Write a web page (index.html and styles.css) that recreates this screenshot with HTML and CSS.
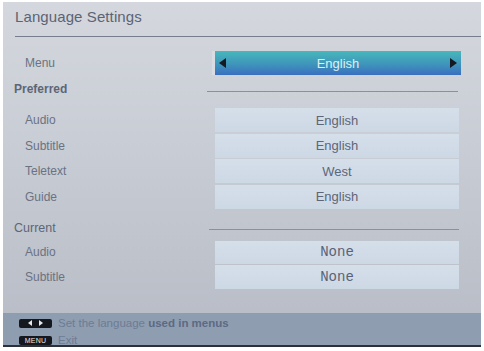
FILE: index.html
```html
<!DOCTYPE html>
<html>
<head>
<meta charset="utf-8">
<link rel="stylesheet" href="styles.css">
</head>
<body>
<div class="panel">
  <div class="header">
    <div class="title">Language Settings</div>
  </div>
  <div class="content">
    <div class="row menu-row">
      <div class="label">Menu</div>
      <div class="selector">
        <span class="arrow left"></span>
        <span class="sel-text">English</span>
        <span class="arrow right"></span>
      </div>
    </div>
    <div class="section preferred">
      <div class="section-title">Preferred</div>
      <div class="section-line"></div>
    </div>
    <div class="group">
      <div class="row item"><div class="label">Audio</div><div class="value">English</div></div>
      <div class="row item"><div class="label">Subtitle</div><div class="value">English</div></div>
      <div class="row item"><div class="label">Teletext</div><div class="value">West</div></div>
      <div class="row item"><div class="label">Guide</div><div class="value">English</div></div>
    </div>
    <div class="section current">
      <div class="section-title light">Current</div>
      <div class="section-line"></div>
    </div>
    <div class="group current-group">
      <div class="row item"><div class="label">Audio</div><div class="value mono">None</div></div>
      <div class="row item"><div class="label">Subtitle</div><div class="value mono">None</div></div>
    </div>
  </div>
  <div class="footer">
    <div class="hint">
      <span class="key arrows"><span class="tri tl"></span><span class="tri tr"></span></span>
      <span class="hint-text">Set the language <b>used in menus</b></span>
    </div>
    <div class="hint">
      <span class="key menu">MENU</span>
      <span class="hint-text">Exit</span>
    </div>
  </div>
</div>
</body>
</html>
```

FILE: styles.css
```css
html, body {
  margin: 0;
  padding: 0;
  background: #ffffff;
}
body {
  width: 484px;
  height: 351px;
  overflow: hidden;
  font-family: "Liberation Sans", Arial, sans-serif;
}
.panel {
  margin: 2px 0 0 3px;
  width: 478px;
  height: 343px;
  background: linear-gradient(#d4d7dd 0%, #c9cdd5 40%, #b6bbc5 100%);
  border-bottom: 2px solid #2b3039;
  display: flex;
  flex-direction: column;
  overflow: hidden;
  position: relative;
}
.header {
  margin-left: 12px;
  padding-top: 6px;
  height: 28px;
  border-bottom: 1px solid #777d8c;
}
.title {
  font-size: 15px;
  color: #5c6474;
  line-height: 18px;
  letter-spacing: 0.1px;
}
.content {
  flex: 1;
  display: flex;
  flex-direction: column;
  padding-top: 14px;
}
.row {
  display: flex;
  align-items: center;
}
.label {
  width: 190px;
  padding-left: 22px;
  font-size: 12px;
  color: #6b7282;
}
.selector {
  width: 246px;
  height: 24px;
  background: linear-gradient(#46b8ba 0%, #3f95bb 55%, #3a6ec0 100%);
  display: flex;
  align-items: center;
  justify-content: space-between;
  padding: 0 4px;
  box-sizing: border-box;
  box-shadow: -3px 0 0 #d9dde3;
}
.sel-text {
  font-size: 13px;
  color: #dcf0f2;
}
.arrow {
  width: 0;
  height: 0;
  border-top: 5px solid transparent;
  border-bottom: 5px solid transparent;
}
.arrow.left { border-right: 7px solid #151a22; }
.arrow.right { border-left: 7px solid #151a22; }
.section {
  display: flex;
  align-items: center;
  height: 22px;
}
.preferred { margin-top: 3px; }
.section-title {
  width: 193px;
  padding-left: 11px;
  font-size: 12px;
  font-weight: bold;
  color: #5e6676;
}
.section-title.light { font-weight: normal; font-size: 12.5px; color: #5e6676; }
.section-line {
  width: 251px;
  height: 1px;
  background: #8a909e;
  margin-top: 4px;
}
.current { margin-top: 8px; }
.current .section-title { width: 195px; }
.current .section-line { width: 250px; margin-top: 4px; }
.group {
  display: flex;
  flex-direction: column;
  gap: 1.5px;
  margin-top: 8px;
}
.current-group { margin-top: 2px; gap: 1px; }
.value {
  width: 244px;
  height: 24px;
  background: linear-gradient(#d5dfea 0%, #cdd8e5 100%);
  font-size: 13px;
  color: #5d6678;
  display: flex;
  align-items: center;
  justify-content: center;
}
.value.mono {
  font-family: "Liberation Mono", "Courier New", monospace;
  font-size: 14px;
  color: #5a6376;
}
.current-group .value { height: 23.5px; }
.footer {
  height: 32px;
  background: #8f9db0;
  padding: 4px 0 0 16px;
  box-sizing: border-box;
  display: flex;
  flex-direction: column;
  gap: 5px;
  margin-top: auto;
}
.hint {
  display: flex;
  align-items: center;
  height: 12px;
}
.key {
  width: 33px;
  height: 9px;
  background: #15181e;
  border-radius: 2px;
  display: inline-flex;
  align-items: center;
  justify-content: center;
  margin-right: 6px;
}
.key.arrows { gap: 7px; }
.tri {
  width: 0;
  height: 0;
  border-top: 3px solid transparent;
  border-bottom: 3px solid transparent;
}
.tri.tl { border-right: 4px solid #e8eaee; }
.tri.tr { border-left: 4px solid #e8eaee; }
.key.menu {
  font-size: 7px;
  color: #e8eaee;
  letter-spacing: 0.2px;
}
.hint-text {
  font-size: 11.5px;
  color: #6c7c95;
}
.hint-text b {
  color: #5c6a83;
}
```
